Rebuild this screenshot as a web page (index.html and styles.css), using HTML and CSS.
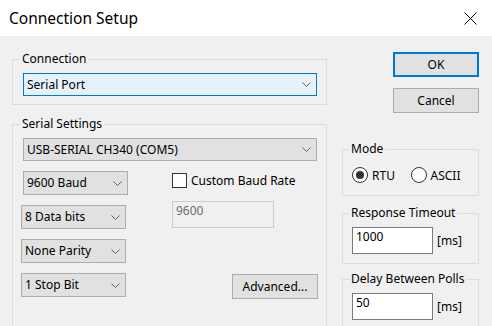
FILE: index.html
```html
<!DOCTYPE html>
<html>
<head>
<meta charset="utf-8">
<link rel="stylesheet" href="styles.css">
</head>
<body>
<div class="window">
  <div class="titlebar">
    <span class="title">Connection Setup</span>
    <svg class="close" width="13" height="13" viewBox="0 0 13 13"><path d="M0.5 0.5 L12.5 12.5 M12.5 0.5 L0.5 12.5" stroke="#000" stroke-width="1" fill="none"/></svg>
  </div>
  <div class="content">
    <div class="left">
      <fieldset class="group conn">
        <legend>Connection</legend>
        <div class="combo focused">
          <span>Serial Port</span>
          <svg class="chev" width="9" height="5" viewBox="0 0 9 5"><path d="M0.5 0.5 L4.5 4.5 L8.5 0.5" stroke="#606060" fill="none"/></svg>
        </div>
      </fieldset>
      <fieldset class="group serial">
        <legend>Serial Settings</legend>
        <div class="combo">
          <span>USB-SERIAL CH340 (COM5)</span>
          <svg class="chev" width="9" height="5" viewBox="0 0 9 5"><path d="M0.5 0.5 L4.5 4.5 L8.5 0.5" stroke="#606060" fill="none"/></svg>
        </div>
        <div class="serial-grid">
          <div class="combo small baud">
            <span>9600 Baud</span>
            <svg class="chev" width="9" height="5" viewBox="0 0 9 5"><path d="M0.5 0.5 L4.5 4.5 L8.5 0.5" stroke="#606060" fill="none"/></svg>
          </div>
          <label class="check">
            <span class="box"></span>
            <span>Custom Baud Rate</span>
          </label>
          <div class="combo small">
            <span>8 Data bits</span>
            <svg class="chev" width="9" height="5" viewBox="0 0 9 5"><path d="M0.5 0.5 L4.5 4.5 L8.5 0.5" stroke="#606060" fill="none"/></svg>
          </div>
          <div class="textbox disabled custom">9600</div>
          <div class="combo small">
            <span>None Parity</span>
            <svg class="chev" width="9" height="5" viewBox="0 0 9 5"><path d="M0.5 0.5 L4.5 4.5 L8.5 0.5" stroke="#606060" fill="none"/></svg>
          </div>
          <div class="combo small stop">
            <span>1 Stop Bit</span>
            <svg class="chev" width="9" height="5" viewBox="0 0 9 5"><path d="M0.5 0.5 L4.5 4.5 L8.5 0.5" stroke="#606060" fill="none"/></svg>
          </div>
          <div class="button advanced">Advanced...</div>
        </div>
      </fieldset>
    </div>
    <div class="right">
      <div class="buttons">
        <div class="button default">OK</div>
        <div class="button cancel">Cancel</div>
      </div>
      <fieldset class="group mode">
        <legend>Mode</legend>
        <div class="radios">
          <label class="radio"><span class="circle checked"></span><span>RTU</span></label>
          <label class="radio"><span class="circle"></span><span>ASCII</span></label>
        </div>
      </fieldset>
      <fieldset class="group timing response">
        <legend>Response Timeout</legend>
        <div class="field"><div class="textbox">1000</div><span>[ms]</span></div>
      </fieldset>
      <fieldset class="group timing delay">
        <legend>Delay Between Polls</legend>
        <div class="field"><div class="textbox">50</div><span>[ms]</span></div>
      </fieldset>
    </div>
  </div>
</div>
</body>
</html>
```
FILE: styles.css
```css
* { box-sizing: border-box; }
html, body {
  margin: 0;
  padding: 0;
}
body {
  width: 492px;
  height: 326px;
  overflow: hidden;
  background: #f0f0f0;
  font-family: "Noto Sans", "Open Sans", sans-serif;
  font-size: 12px;
  color: #000;
}
.window {
  width: 492px;
  height: 326px;
}
.titlebar {
  height: 36px;
  background: #fff;
  display: flex;
  align-items: center;
  justify-content: space-between;
  padding: 0 15px 0 9px;
}
.title {
  font-size: 15.5px;
  line-height: 20px;
  margin-top: -1px;
}
.close {
  display: block;
  margin-top: 1px;
}
.content {
  display: flex;
  padding: 15px 0 0 12px;
  gap: 15px;
}
.left {
  width: 315px;
  display: flex;
  flex-direction: column;
}
.right {
  width: 137px;
  display: flex;
  flex-direction: column;
}
.group {
  margin: 0;
  border: 1px solid #dcdcdc;
  min-width: 0;
}
.group legend {
  line-height: 16px;
  padding: 0 2px;
  margin-left: -3px;
}
.conn {
  padding: 6px 9px 8px 10px;
}
.serial {
  margin-top: 11px;
  padding: 6px 9px 40px 10px;
}
.combo {
  height: 23px;
  border: 1px solid #adadad;
  background: #e1e1e1;
  display: flex;
  align-items: center;
  justify-content: space-between;
  padding: 0 5px 0 3px;
  line-height: 16px;
  white-space: nowrap;
}
.combo.focused {
  border-color: #0078d7;
  background: #e5f1fb;
}
.chev { display: block; flex: none; }
.combo.small {
  width: 105px;
  height: 24px;
  padding-right: 5px;
}
.serial-grid {
  margin-top: 10px;
  margin-left: -2px;
  display: grid;
  grid-template-columns: 151px 60px 86px;
  grid-template-rows: 24px 24px 24px 24px;
  row-gap: 10px;
}
.baud { margin-left: 2px; }
.check {
  grid-column: 2 / span 2;
  display: flex;
  align-items: center;
  gap: 4px;
  align-self: start;
  margin-top: 2px;
  height: 15px;
  white-space: nowrap;
}
.box {
  width: 15px;
  height: 15px;
  border: 1px solid #333;
  background: #fff;
  flex: none;
}
.textbox {
  height: 27px;
  border: 1px solid #7a7a7a;
  background: #fff;
  padding: 1px 3px 0;
  line-height: 16px;
}
.textbox.disabled {
  border-color: #cccccc;
  background: #f0f0f0;
  color: #6d6d6d;
}
.custom {
  grid-column: 2 / span 2;
  grid-row: 2;
  width: 102px;
  margin-top: -4px;
}
.stop { grid-row: 4; grid-column: 1; }
.advanced {
  grid-row: 4;
  grid-column: 3;
  margin-top: 1px;
}
.button {
  height: 25px;
  width: 86px;
  border: 1px solid #adadad;
  background: #e1e1e1;
  display: flex;
  align-items: center;
  justify-content: center;
  line-height: 16px;
}
.button.default {
  border: 2px solid #0078d7;
}
.buttons {
  display: flex;
  flex-direction: column;
  align-items: flex-end;
  gap: 11px;
  margin-top: 1px;
}
.mode {
  margin-top: 28px;
  padding: 10px 9px 12px 9px;
}
.radios {
  display: flex;
  gap: 0;
  height: 16px;
}
.radio {
  display: flex;
  align-items: center;
  gap: 4px;
  width: 61px;
}
.circle {
  width: 16px;
  height: 16px;
  border: 1px solid #333;
  border-radius: 50%;
  background: #fff;
  flex: none;
  display: flex;
  align-items: center;
  justify-content: center;
}
.circle.checked::after {
  content: "";
  width: 8px;
  height: 8px;
  border-radius: 50%;
  background: #333;
}
.timing {
  padding: 6px 9px 9px 9px;
}
.response { margin-top: 9px; }
.delay { margin-top: 7px; }
.field {
  display: flex;
  align-items: center;
  gap: 4px;
}
.field .textbox { width: 81px; }
```
